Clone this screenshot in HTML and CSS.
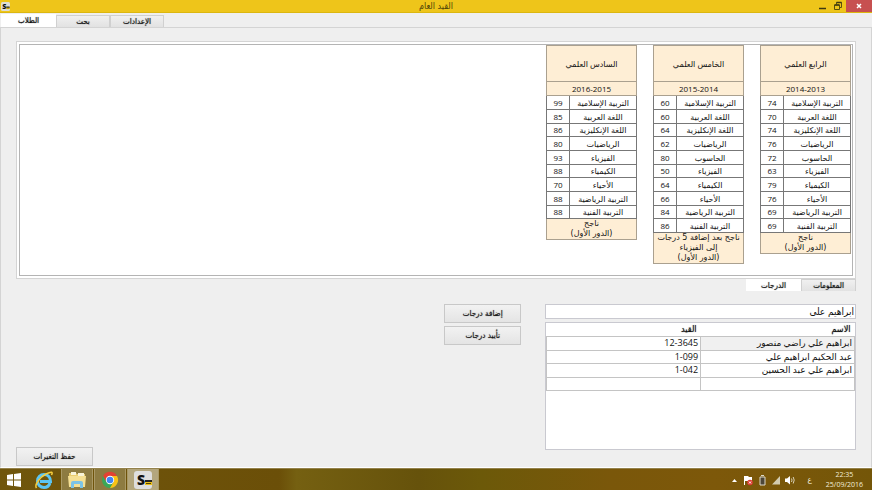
FILE: index.html
```html
<!DOCTYPE html>
<html lang="ar">
<head>
  <meta charset="UTF-8">
  <meta name="viewport" content="width=device-width, initial-scale=1">
  <title>القيد العام</title>
  <link rel="stylesheet" href="styles.css">
</head>
<body>

  <header class="titlebar">
    <svg class="app-icon" viewBox="0 0 24 24">
      <rect width="24" height="24" rx="4" fill="#dfddd5"/>
      <text class="logo-letter" x="3" y="19" font-size="19">S</text>
      <path d="M14 12h9v4h-9z" fill="#222"/>
      <path d="M14 15h9v4h-9z" fill="#c9a200"/>
    </svg>
    <h1 dir="rtl">القيد العام</h1>
    <div class="window-buttons">
      <button aria-label="تصغير">
        <svg viewBox="0 0 10 10"><path d="M2 7.500h7" stroke="#3e3a10" stroke-width="1.500"/></svg>
      </button>
      <button aria-label="استعادة">
        <svg viewBox="0 0 10 10"><path d="M3.500 3.500v-2h5v5h-2M1.500 4h5v4.500h-5z" fill="none" stroke="#5b500d"/><path d="M3.500 1.500h5M1.500 4h5" stroke="#3e3a10" stroke-width="1.500"/></svg>
      </button>
      <button class="close" aria-label="إغلاق">
        <svg viewBox="0 0 10 10"><path d="M3 3l4 4M7 3l-4 4" stroke="#fff" stroke-width="1.500"/></svg>
      </button>
    </div>
  </header>

  <nav class="tabs main-tabs">
    <button class="tab active" dir="rtl">الطلاب</button>
    <button class="tab" dir="rtl">بحث</button>
    <button class="tab" dir="rtl">الإعدادات</button>
  </nav>

  <main class="window">
    <!-- Grade records -->
    <section class="records-frame">
      <div class="records" dir="rtl">
        <table class="record">
          <colgroup><col><col class="mark-col"></colgroup>
          <thead>
            <tr class="stage"><th colspan="2">الرابع العلمي</th></tr>
            <tr class="year"><th colspan="2">2014-2013</th></tr>
          </thead>
          <tbody>
            <tr><td>التربية الإسلامية</td><td>74</td></tr>
            <tr><td>اللغة العربية</td><td>70</td></tr>
            <tr><td>اللغة الإنكليزية</td><td>74</td></tr>
            <tr><td>الرياضيات</td><td>76</td></tr>
            <tr><td>الحاسوب</td><td>72</td></tr>
            <tr><td>الفيزياء</td><td>63</td></tr>
            <tr><td>الكيمياء</td><td>79</td></tr>
            <tr><td>الأحياء</td><td>76</td></tr>
            <tr><td>التربية الرياضية</td><td>69</td></tr>
            <tr><td>التربية الفنية</td><td>69</td></tr>
          </tbody>
          <tfoot>
            <tr><td colspan="2">ناجح<br>(الدور الأول)</td></tr>
          </tfoot>
        </table>

        <table class="record">
          <colgroup><col><col class="mark-col"></colgroup>
          <thead>
            <tr class="stage"><th colspan="2">الخامس العلمي</th></tr>
            <tr class="year"><th colspan="2">2015-2014</th></tr>
          </thead>
          <tbody>
            <tr><td>التربية الإسلامية</td><td>60</td></tr>
            <tr><td>اللغة العربية</td><td>60</td></tr>
            <tr><td>اللغة الإنكليزية</td><td>64</td></tr>
            <tr><td>الرياضيات</td><td>62</td></tr>
            <tr><td>الحاسوب</td><td>80</td></tr>
            <tr><td>الفيزياء</td><td>50</td></tr>
            <tr><td>الكيمياء</td><td>64</td></tr>
            <tr><td>الأحياء</td><td>66</td></tr>
            <tr><td>التربية الرياضية</td><td>84</td></tr>
            <tr><td>التربية الفنية</td><td>86</td></tr>
          </tbody>
          <tfoot>
            <tr><td colspan="2">ناجح بعد إضافة 5 درجات<br>إلى الفيزياء<br>(الدور الأول)</td></tr>
          </tfoot>
        </table>

        <table class="record">
          <colgroup><col><col class="mark-col"></colgroup>
          <thead>
            <tr class="stage"><th colspan="2">السادس العلمي</th></tr>
            <tr class="year"><th colspan="2">2016-2015</th></tr>
          </thead>
          <tbody>
            <tr><td>التربية الإسلامية</td><td>99</td></tr>
            <tr><td>اللغة العربية</td><td>85</td></tr>
            <tr><td>اللغة الإنكليزية</td><td>86</td></tr>
            <tr><td>الرياضيات</td><td>80</td></tr>
            <tr><td>الفيزياء</td><td>93</td></tr>
            <tr><td>الكيمياء</td><td>88</td></tr>
            <tr><td>الأحياء</td><td>70</td></tr>
            <tr><td>التربية الرياضية</td><td>88</td></tr>
            <tr><td>التربية الفنية</td><td>88</td></tr>
          </tbody>
          <tfoot>
            <tr><td colspan="2">ناجح<br>(الدور الأول)</td></tr>
          </tfoot>
        </table>
      </div>
    </section>

    <nav class="tabs record-tabs" dir="rtl">
      <button class="tab">المعلومات</button>
      <button class="tab active">الدرجات</button>
    </nav>

    <!-- Student search -->
    <section class="lower" dir="rtl">
      <div class="search">
        <input class="search-input" type="text" value="ابراهيم علي" aria-label="بحث عن طالب">
        <div class="students">
          <table>
            <thead>
              <tr><th>الاسم</th><th>القيد</th></tr>
            </thead>
            <tbody>
              <tr><td class="selected">ابراهيم علي راضي منصور</td><td>12-3645</td></tr>
              <tr><td>عبد الحكيم ابراهيم علي</td><td>1-099</td></tr>
              <tr><td>ابراهيم علي عبد الحسين</td><td>1-042</td></tr>
              <tr><td></td><td></td></tr>
            </tbody>
          </table>
        </div>
      </div>
      <div class="actions">
        <button class="btn">إضافة درجات</button>
        <button class="btn">تأييد درجات</button>
      </div>
      <button class="btn save">حفظ التغيرات</button>
    </section>
  </main>

  <footer class="taskbar">
    <button class="task" aria-label="Start">
      <svg viewBox="0 0 20 20"><path d="M3 5l6-1v5.500H3zM10 4l7-1v6.500h-7zM3 10.500h6V16l-6-1zM10 10.500h7V17l-7-1z" fill="#fff"/></svg>
    </button>
    <button class="task" aria-label="Internet Explorer">
      <svg viewBox="0 0 20 20">
        <path d="M16 13c-1 3-3.500 4.500-6 4.500A6.500 6.500 0 0 1 3.500 11 6.500 6.500 0 0 1 10 4.500c4 0 6.500 3 6.500 7H6" fill="none" stroke="#5cc6f3" stroke-width="3"/>
        <path d="M2.500 18C0 15 6 7 12 4s7-2 5.500 1" fill="none" stroke="#f5cd3c" stroke-width="1.500"/>
      </svg>
    </button>
    <button class="task open" aria-label="File Explorer">
      <svg viewBox="0 0 20 20">
        <path d="M2 3h7l1 1h8v13H2z" fill="#e9cd72"/>
        <path d="M4 2h5v3H4zM11 3h6v3h-6z" fill="#f8f3d8"/>
        <path d="M1 6h18l-1 11H2z" fill="#f5df93"/>
        <path d="M4 18v-5q0-2 2-2h8q2 0 2 2v5h-3v-4H7v4z" fill="#7cc3e6"/>
      </svg>
    </button>
    <button class="task open" aria-label="Chrome">
      <svg viewBox="0 0 20 20">
        <circle cx="10" cy="10" r="8" fill="#3aa757"/>
        <path d="M3 6a8 8 0 0 1 14 0l-7 1-3.500 5z" fill="#e34133"/>
        <path d="M10 6h7a8 8 0 0 1-7 12l3.500-6z" fill="#fbc116"/>
        <circle cx="10" cy="10" r="4.200" fill="#fff"/>
        <circle cx="10" cy="10" r="3.300" fill="#4285f4"/>
      </svg>
    </button>
    <button class="task open current" aria-label="القيد العام">
      <svg viewBox="0 0 20 20">
        <rect x="1" y="1" width="18" height="18" rx="3" fill="#dedede"/>
        <text class="logo-letter" x="4" y="15" font-size="14">S</text>
        <path d="M12 10h7v2h-7z" fill="#222"/>
        <path d="M12 12h7v3h-7z" fill="#eec21a"/>
        <path d="M13 13.500h5" stroke="#594600"/>
      </svg>
    </button>

    <div class="tray">
      <svg viewBox="0 0 12 12"><path d="M4 8l2.500-3L9 8z" fill="#fff"/></svg>
      <svg viewBox="0 0 12 12">
        <path d="M2.500 2v9" stroke="#fff"/>
        <path d="M3 2h3l1 1h3v4H3z" fill="#fff"/>
        <circle cx="8" cy="8.500" r="2.800" fill="#dd3b32"/>
        <path d="M7 7.500l2 2M9 7.500l-2 2" stroke="#fff"/>
      </svg>
      <svg viewBox="0 0 12 12"><path d="M5 1.500h3M4 3h5v8H4z" fill="#4d4638" stroke="#ddd8c8"/></svg>
      <svg viewBox="0 0 12 12"><path d="M2 10.500L10 2v8.500z" fill="#d3ccb0"/></svg>
      <svg viewBox="0 0 12 12">
        <path d="M1 4.500h2L6 2v8.500L3 8H1z" fill="#fff"/>
        <path d="M7.500 4.500q1 1.500 0 3.500M9.200 3q2 3 0 6.500" fill="none" stroke="#d9d2b8"/>
      </svg>
      <span class="lang">ع</span>
      <div class="clock"><span>22:35</span><span>25/09/2016</span></div>
    </div>
  </footer>

</body>
</html>
```

FILE: styles.css
```css
* {
  box-sizing: border-box;
}

body {
  margin: 0;
  min-height: 100vh;
  display: flex;
  flex-direction: column;
  background: #efefef;
  color: #111;
  font-family: "DejaVu Sans Condensed", "DejaVu Sans", sans-serif;
  font-size: 8px;
  line-height: 10px;
}

button, input {
  font: inherit;
  color: inherit;
}

button {
  padding: 0;
  border: none;
  background: none;
}

svg {
  display: block;
}

.logo-letter {
  font-family: "Open Sans", sans-serif;
  font-weight: 800;
  fill: #111;
}

/* Title bar */
.titlebar {
  display: grid;
  grid-template-columns: 1fr auto 1fr;
  align-items: center;
  height: 13px;
  background: #eec51a;
  border-bottom: 1px solid #dcb70f;
}

.titlebar h1 {
  margin: 0;
  font-size: 9px;
  font-weight: normal;
  color: #514509;
}

.app-icon {
  width: 9px;
  height: 9px;
  margin-left: 1px;
}

.window-buttons {
  display: flex;
  justify-content: flex-end;
  height: 12px;
}

.window-buttons button {
  width: 16px;
}

.window-buttons svg {
  width: 10px;
  height: 10px;
  margin: 0 auto;
}

.window-buttons .close {
  width: 26px;
  background: #c75050;
}

/* Tabs */
.tabs {
  display: flex;
}

.tab {
  width: 54px;
  height: 12px;
  border: 1px solid #d0d0d0;
  border-bottom: none;
  background: linear-gradient(#f0f0f0, #e2e2e2);
}

.tab, .btn, .students th {
  font-weight: normal;
  text-shadow: 0 0 1px #555;
}

.tab.active {
  background: #fff;
  border-color: #fff;
}

.main-tabs {
  align-items: flex-end;
  height: 14px;
  padding-left: 1px;
}

.main-tabs .active {
  width: 55px;
  height: 13px;
}

.record-tabs .tab {
  width: 55px;
}

/* Window content */
.window {
  flex: 1;
  display: flex;
  flex-direction: column;
  padding: 13px 15px 1px;
  border: 1px solid #d4d4d4;
  border-bottom: 1px solid #fff;
}

.records-frame {
  padding: 2px;
  border: 1px solid #d4d4d4;
  background: #fff;
}

.records {
  display: flex;
  align-items: flex-start;
  gap: 16px;
  min-height: 232px;
  padding: 0 1px;
  border: 1px solid #b4b4b4;
  background: #fff;
}

.record {
  width: 91px;
  border-collapse: collapse;
  table-layout: fixed;
  font-family: "Open Sans", "DejaVu Sans", sans-serif;
  text-align: center;
}

.record th, .record td {
  padding: 0;
  border: 1px solid #777;
  font-weight: normal;
}

.record th, .record tfoot td {
  background: #feeed5;
  border-color: #aaa08f;
}

.record tfoot td {
  font-family: "DejaVu Sans", sans-serif;
}

.record tr {
  height: 14px;
}

.record tbody tr:nth-child(3n) {
  height: 13px;
}

.record .stage {
  height: 36px;
}

.mark-col {
  width: 23px;
}

/* Lower part */
.lower {
  flex: 1;
  display: flex;
  gap: 24px;
  padding-top: 13px;
}

.search {
  display: flex;
  flex-direction: column;
  gap: 3px;
  width: 37%;
  margin-bottom: 16px;
}

.search-input {
  width: 100%;
  height: 15px;
  padding: 0 1px;
  border: 1px solid #c9c9d0;
  background: #fff;
  font-size: 10px;
}

.students {
  flex: 1;
  border: 1px solid #c9c9d0;
  background: #fff;
}

.students table {
  width: 100%;
  border-collapse: collapse;
  table-layout: fixed;
}

.students tr {
  height: 14px;
}

.students thead tr, .students tbody tr:nth-child(even) {
  height: 13px;
}

.students th, .students td {
  padding: 0 2px;
  border: 1px solid #c4c4c4;
  font-size: 9px;
  text-align: right;
}

.students td {
  font-family: "Open Sans", "DejaVu Sans", sans-serif;
}

.students th {
  padding: 0 4px;
  border: none;
}

.students .selected {
  background: #f0f0f0;
}

.actions {
  display: flex;
  flex-direction: column;
  gap: 3px;
}

.btn {
  width: 77px;
  height: 19px;
  border: 1px solid #c8c8c8;
  background: linear-gradient(#f2f2f2, #e4e4e4);
}

.save {
  align-self: flex-end;
  margin-right: auto;
}

/* Taskbar */
.taskbar {
  display: flex;
  gap: 1px;
  height: 22px;
  background: linear-gradient(to right, #70560c, #6b4f08 32%, #756011 34%, #66520b 48%, #6c5909 55%, #7a570a 70%, #7d580a 82%, #745608);
  border-top: 1px solid #94824c;
  color: #f3edda;
}

.task {
  width: 32px;
}

.task:first-child {
  width: 27px;
}

.task svg {
  width: 20px;
  height: 20px;
  margin: 0 auto;
}

.open {
  background: #8d7b41;
  border: solid #a99966;
  border-width: 0 1px;
}

.open.current {
  background: #b3a67d;
}

.tray {
  display: flex;
  align-items: center;
  gap: 2px;
  margin-left: auto;
  padding-right: 9px;
}

.tray svg {
  width: 12px;
  height: 12px;
}

.lang {
  margin: 0 12px 0 10px;
}

.clock {
  display: flex;
  flex-direction: column;
  font-family: "Open Sans", sans-serif;
  font-size: 7px;
  text-align: center;
}
```
